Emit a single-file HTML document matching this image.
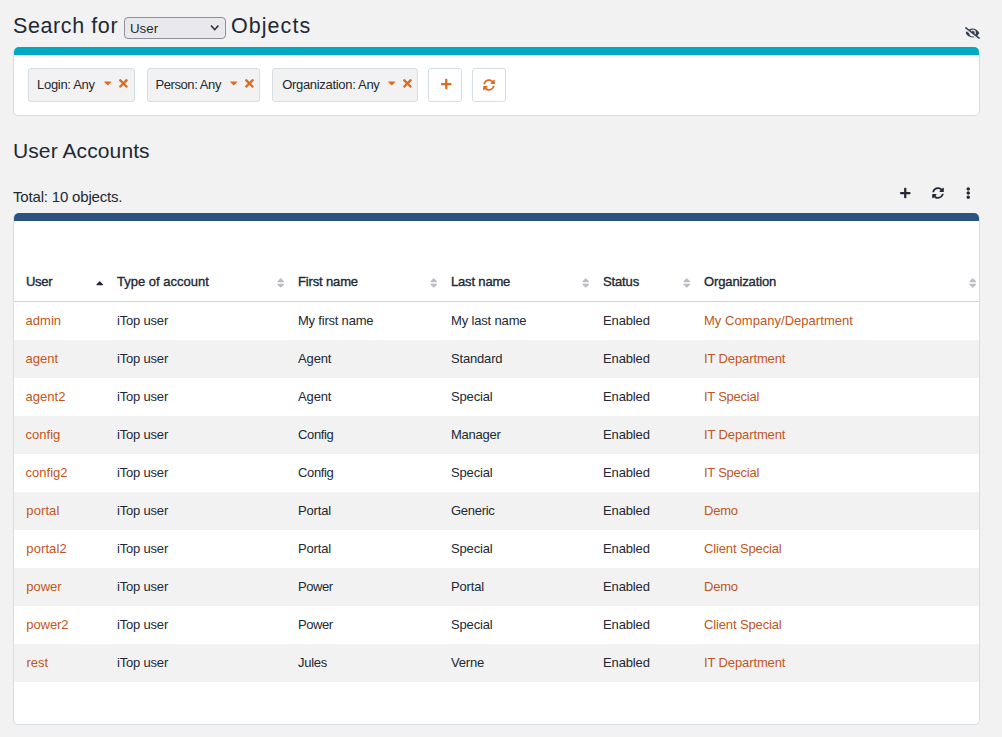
<!DOCTYPE html>
<html lang="en">
<head>
<meta charset="utf-8">
<title>Search for User Objects</title>
<style>
*{box-sizing:border-box;margin:0;padding:0}
html,body{width:1002px;height:737px;overflow:hidden;background:#f2f2f2;}
body{font-family:"Liberation Sans",sans-serif;color:#212934;position:relative;font-size:13px}
.abs{position:absolute;white-space:nowrap}
.h1{left:13px;top:9.5px;font-size:21.5px;line-height:32px;color:#212934;letter-spacing:0.6px}
.sel{left:124px;top:17px;width:102px;height:22px;border:1px solid #8f8f9d;border-radius:4px;background:#e9e9ed;font-size:13.3px;line-height:21px;padding-left:5px;color:#212934}
.panel{left:13px;width:967px;background:#fff;border:1px solid #d5dde5;border-radius:5px}
.bar{left:14px;width:965px;height:8px;border-radius:5px 5px 0 0}
.chip{top:68px;height:34px;background:#f2f2f2;border:1px solid #d5dde5;border-radius:3px;font-size:13px;line-height:32px;padding-left:8.5px;color:#212934;letter-spacing:-0.31px}
.btn{top:68px;height:34px;width:34px;background:#fff;border:1px solid #d5dde5;border-radius:3px}
.h2{left:13px;top:136px;font-size:21px;line-height:30px;color:#212934;letter-spacing:0.1px}
.total{left:13px;top:187px;font-size:15px;line-height:20px;color:#212934;letter-spacing:-0.18px}
.th{top:272px;font-size:13px;line-height:20px;font-weight:normal;-webkit-text-stroke:0.35px #212934;color:#212934}
.row{position:absolute;left:14px;width:965px;height:38px}
.row.alt{background:#f2f2f2}
.c{position:absolute;top:9px;line-height:20px;font-size:13px;white-space:nowrap;color:#212934}
.c.lk{color:#c05621}
svg{position:absolute;overflow:visible}
</style>
</head>
<body>
<div class="abs h1">Search for</div>
<div class="abs sel">User</div>
<svg style="left:209.8px;top:24.3px" width="10" height="8" viewBox="0 0 10 8"><path d="M1 1.5 L4.7 5.7 L8.4 1.5" fill="none" stroke="#212934" stroke-width="1.5"/></svg>
<div class="abs h1" style="left:231px;letter-spacing:1.05px">Objects</div>

<div class="abs panel" style="top:47px;height:69px"></div>
<div class="abs bar" style="top:47px;background:#00a8c2"></div>
<div class="abs chip" style="left:28px;width:107px;padding-left:8.1px">Login: Any</div>
<div class="abs chip" style="left:147px;width:113px;padding-left:7.5px;letter-spacing:-0.42px">Person: Any</div>
<div class="abs chip" style="left:272px;width:146px;padding-left:9.2px">Organization: Any</div>
<div class="abs btn" style="left:428px"></div>
<div class="abs btn" style="left:472px"></div>

<div class="abs h2">User Accounts</div>
<div class="abs total">Total: 10 objects.</div>

<div class="abs panel" style="top:213px;height:512px"></div>
<div class="abs bar" style="top:213px;background:#2c5282"></div>
<div class="abs" style="left:14px;top:301px;width:965px;height:1px;background:#ccd4db"></div>
<div class="abs th" style="left:26px;letter-spacing:-0.3px">User</div>
<div class="abs th" style="left:117px">Type of account</div>
<div class="abs th" style="left:298px;letter-spacing:-0.15px">First name</div>
<div class="abs th" style="left:451px;letter-spacing:-0.17px">Last name</div>
<div class="abs th" style="left:603px;letter-spacing:-0.14px">Status</div>
<div class="abs th" style="left:704px;letter-spacing:-0.13px">Organization</div>
<div class="row" style="top:302px">
<span class="c lk" style="left:11.6px">admin</span>
<span class="c" style="left:103.0px;letter-spacing:-0.188px">iTop user</span>
<span class="c" style="left:284.0px;letter-spacing:-0.208px">My first name</span>
<span class="c" style="left:437.0px;letter-spacing:-0.159px">My last name</span>
<span class="c" style="left:589.0px;letter-spacing:-0.133px">Enabled</span>
<span class="c lk" style="left:690.0px;letter-spacing:0.040px">My Company/Department</span>
</div>
<div class="row alt" style="top:340px">
<span class="c lk" style="left:11.6px">agent</span>
<span class="c" style="left:103.0px;letter-spacing:-0.188px">iTop user</span>
<span class="c" style="left:284.0px;letter-spacing:-0.125px">Agent</span>
<span class="c" style="left:437.0px;letter-spacing:-0.179px">Standard</span>
<span class="c" style="left:589.0px;letter-spacing:-0.133px">Enabled</span>
<span class="c lk" style="left:690.0px;letter-spacing:-0.117px">IT Department</span>
</div>
<div class="row" style="top:378px">
<span class="c lk" style="left:11.6px">agent2</span>
<span class="c" style="left:103.0px;letter-spacing:-0.188px">iTop user</span>
<span class="c" style="left:284.0px;letter-spacing:-0.125px">Agent</span>
<span class="c" style="left:437.0px;letter-spacing:-0.167px">Special</span>
<span class="c" style="left:589.0px;letter-spacing:-0.133px">Enabled</span>
<span class="c lk" style="left:690.0px;letter-spacing:-0.244px">IT Special</span>
</div>
<div class="row alt" style="top:416px">
<span class="c lk" style="left:11.6px">config</span>
<span class="c" style="left:103.0px;letter-spacing:-0.188px">iTop user</span>
<span class="c" style="left:284.0px;letter-spacing:-0.350px">Config</span>
<span class="c" style="left:437.0px;letter-spacing:-0.233px">Manager</span>
<span class="c" style="left:589.0px;letter-spacing:-0.133px">Enabled</span>
<span class="c lk" style="left:690.0px;letter-spacing:-0.117px">IT Department</span>
</div>
<div class="row" style="top:454px">
<span class="c lk" style="left:11.6px">config2</span>
<span class="c" style="left:103.0px;letter-spacing:-0.188px">iTop user</span>
<span class="c" style="left:284.0px;letter-spacing:-0.350px">Config</span>
<span class="c" style="left:437.0px;letter-spacing:-0.167px">Special</span>
<span class="c" style="left:589.0px;letter-spacing:-0.133px">Enabled</span>
<span class="c lk" style="left:690.0px;letter-spacing:-0.244px">IT Special</span>
</div>
<div class="row alt" style="top:492px">
<span class="c lk" style="left:12.3px;letter-spacing:0.100px">portal</span>
<span class="c" style="left:103.0px;letter-spacing:-0.188px">iTop user</span>
<span class="c" style="left:284.0px;letter-spacing:-0.140px">Portal</span>
<span class="c" style="left:437.0px;letter-spacing:-0.292px">Generic</span>
<span class="c" style="left:589.0px;letter-spacing:-0.133px">Enabled</span>
<span class="c lk" style="left:690.0px;letter-spacing:-0.233px">Demo</span>
</div>
<div class="row" style="top:530px">
<span class="c lk" style="left:12.3px;letter-spacing:0.100px">portal2</span>
<span class="c" style="left:103.0px;letter-spacing:-0.188px">iTop user</span>
<span class="c" style="left:284.0px;letter-spacing:-0.140px">Portal</span>
<span class="c" style="left:437.0px;letter-spacing:-0.167px">Special</span>
<span class="c" style="left:589.0px;letter-spacing:-0.133px">Enabled</span>
<span class="c lk" style="left:690.0px;letter-spacing:-0.135px">Client Special</span>
</div>
<div class="row alt" style="top:568px">
<span class="c lk" style="left:12.3px;letter-spacing:-0.025px">power</span>
<span class="c" style="left:103.0px;letter-spacing:-0.188px">iTop user</span>
<span class="c" style="left:284.0px;letter-spacing:-0.438px">Power</span>
<span class="c" style="left:437.0px;letter-spacing:-0.140px">Portal</span>
<span class="c" style="left:589.0px;letter-spacing:-0.133px">Enabled</span>
<span class="c lk" style="left:690.0px;letter-spacing:-0.233px">Demo</span>
</div>
<div class="row" style="top:606px">
<span class="c lk" style="left:12.3px;letter-spacing:-0.080px">power2</span>
<span class="c" style="left:103.0px;letter-spacing:-0.188px">iTop user</span>
<span class="c" style="left:284.0px;letter-spacing:-0.438px">Power</span>
<span class="c" style="left:437.0px;letter-spacing:-0.167px">Special</span>
<span class="c" style="left:589.0px;letter-spacing:-0.133px">Enabled</span>
<span class="c lk" style="left:690.0px;letter-spacing:-0.135px">Client Special</span>
</div>
<div class="row alt" style="top:644px">
<span class="c lk" style="left:12.4px">rest</span>
<span class="c" style="left:103.0px;letter-spacing:-0.188px">iTop user</span>
<span class="c" style="left:284.0px;letter-spacing:-0.250px">Jules</span>
<span class="c" style="left:437.0px;letter-spacing:-0.175px">Verne</span>
<span class="c" style="left:589.0px;letter-spacing:-0.133px">Enabled</span>
<span class="c lk" style="left:690.0px;letter-spacing:-0.117px">IT Department</span>
</div>
<svg style="left:103.6px;top:77.2px" width="7.500" height="12" viewBox="0 0 320 512"><path fill="#dd6b20" d="M31.3 192h257.3c17.8 0 26.7 21.5 14.1 34.1L174.1 354.8c-7.8 7.8-20.5 7.8-28.3 0L17.2 226.1C4.6 213.5 13.5 192 31.3 192z"/></svg>
<svg style="left:229.6px;top:77.2px" width="7.500" height="12" viewBox="0 0 320 512"><path fill="#dd6b20" d="M31.3 192h257.3c17.8 0 26.7 21.5 14.1 34.1L174.1 354.8c-7.8 7.8-20.5 7.8-28.3 0L17.2 226.1C4.6 213.5 13.5 192 31.3 192z"/></svg>
<svg style="left:387.6px;top:77.2px" width="7.500" height="12" viewBox="0 0 320 512"><path fill="#dd6b20" d="M31.3 192h257.3c17.8 0 26.7 21.5 14.1 34.1L174.1 354.8c-7.8 7.8-20.5 7.8-28.3 0L17.2 226.1C4.6 213.5 13.5 192 31.3 192z"/></svg>
<svg style="left:119.3px;top:77.1px" width="8.800" height="12.8" viewBox="0 0 352 512"><path fill="#dd6b20" d="M242.72 256l100.07-100.07c12.28-12.28 12.28-32.19 0-44.48l-22.24-22.24c-12.28-12.28-32.19-12.28-44.48 0L176 189.28 75.93 89.21c-12.28-12.28-32.19-12.28-44.48 0L9.21 111.45c-12.28 12.28-12.28 32.19 0 44.48L109.28 256 9.21 356.07c-12.28 12.28-12.28 32.19 0 44.48l22.24 22.24c12.28 12.28 32.2 12.28 44.48 0L176 322.72l100.07 100.07c12.28 12.28 32.2 12.28 44.48 0l22.24-22.24c12.28-12.28 12.28-32.19 0-44.48L242.72 256z"/></svg>
<svg style="left:245.3px;top:77.1px" width="8.800" height="12.8" viewBox="0 0 352 512"><path fill="#dd6b20" d="M242.72 256l100.07-100.07c12.28-12.28 12.28-32.19 0-44.48l-22.24-22.24c-12.28-12.28-32.19-12.28-44.48 0L176 189.28 75.93 89.21c-12.28-12.28-32.19-12.28-44.48 0L9.21 111.45c-12.28 12.28-12.28 32.19 0 44.48L109.28 256 9.21 356.07c-12.28 12.28-12.28 32.19 0 44.48l22.24 22.24c12.28 12.28 32.2 12.28 44.48 0L176 322.72l100.07 100.07c12.28 12.28 32.2 12.28 44.48 0l22.24-22.24c12.28-12.28 12.28-32.19 0-44.48L242.72 256z"/></svg>
<svg style="left:403.3px;top:77.1px" width="8.800" height="12.8" viewBox="0 0 352 512"><path fill="#dd6b20" d="M242.72 256l100.07-100.07c12.28-12.28 12.28-32.19 0-44.48l-22.24-22.24c-12.28-12.28-32.19-12.28-44.48 0L176 189.28 75.93 89.21c-12.28-12.28-32.19-12.28-44.48 0L9.21 111.45c-12.28 12.28-12.28 32.19 0 44.48L109.28 256 9.21 356.07c-12.28 12.28-12.28 32.19 0 44.48l22.24 22.24c12.28 12.28 32.2 12.28 44.48 0L176 322.72l100.07 100.07c12.28 12.28 32.2 12.28 44.48 0l22.24-22.24c12.28-12.28 12.28-32.19 0-44.48L242.72 256z"/></svg>
<svg style="left:440.5px;top:77.95px" width="10.500" height="12" viewBox="0 0 448 512"><path fill="#dd6b20" d="M416 208H272V64c0-17.67-14.33-32-32-32h-32c-17.67 0-32 14.33-32 32v144H32c-17.67 0-32 14.33-32 32v32c0 17.67 14.33 32 32 32h144v144c0 17.67 14.33 32 32 32h32c17.67 0 32-14.33 32-32V304h144c17.67 0 32-14.33 32-32v-32c0-17.67-14.33-32-32-32z"/></svg>
<svg style="left:483.2px;top:78.55px" width="12.000" height="12" viewBox="0 0 512 512"><path fill="#dd6b20" d="M370.72 133.28C339.458 104.008 298.888 87.962 255.848 88c-77.458.068-144.328 53.178-162.791 126.85-1.344 5.363-6.122 9.15-11.651 9.15H24.103c-7.498 0-13.194-6.807-11.807-14.176C33.933 94.924 134.813 8 256 8c66.448 0 126.791 26.136 171.315 68.685L463.03 40.97C478.149 25.851 504 36.559 504 57.941V192c0 13.255-10.745 24-24 24H345.941c-21.382 0-32.09-25.851-16.971-40.971l41.75-41.749zM32 296h134.059c21.382 0 32.09 25.851 16.971 40.971l-41.75 41.75c31.262 29.273 71.835 45.319 114.876 45.28 77.418-.07 144.315-53.144 162.787-126.849 1.344-5.363 6.122-9.15 11.651-9.15h57.304c7.498 0 13.194 6.807 11.807 14.176C478.067 417.076 377.187 504 256 504c-66.448 0-126.791-26.136-171.315-68.685L48.97 471.03C33.851 486.149 8 475.441 8 454.059V320c0-13.255 10.745-24 24-24z"/></svg>
<svg style="left:965px;top:26.6px" width="15.000" height="12" viewBox="0 0 640 512"><path fill="#333e51" d="M320 400c-75.85 0-137.25-58.71-142.9-133.11L72.2 185.820c-13.79 17.3-26.48 35.59-36.72 55.59a32.350 32.350 0 0 0 0 29.190C89.710 376.410 197.070 448 320 448c26.910 0 52.870-4 77.890-10.460L346 397.390a144.130 144.130 0 0 1-26 2.610zm313.820 58.100l-110.550-85.440a331.250 331.250 0 0 0 81.250-102.070 32.350 32.350 0 0 0 0-29.190C550.290 135.590 442.930 64 320 64a308.150 308.150 0 0 0-147.320 37.700L45.460 3.370A16 16 0 0 0 23 6.180L3.370 31.450A16 16 0 0 0 6.180 53.900l588.360 454.730a16 16 0 0 0 22.460-2.810l19.640-25.270a16 16 0 0 0-2.820-22.450zm-183.720-142l-39.300-30.380A94.750 94.750 0 0 0 416 256a94.760 94.760 0 0 0-121.310-92.210A47.650 47.650 0 0 1 304 192a46.640 46.640 0 0 1-1.540 10l-73.610-56.890A142.310 142.310 0 0 1 320 112a143.920 143.920 0 0 1 144 144c0 21.630-5.290 41.790-13.900 60.110z"/></svg>
<svg style="left:900.05px;top:186.85px" width="10.500" height="12" viewBox="0 0 448 512"><path fill="#212934" d="M416 208H272V64c0-17.67-14.33-32-32-32h-32c-17.67 0-32 14.33-32 32v144H32c-17.67 0-32 14.33-32 32v32c0 17.67 14.33 32 32 32h144v144c0 17.67 14.33 32 32 32h32c17.67 0 32-14.33 32-32V304h144c17.67 0 32-14.33 32-32v-32c0-17.67-14.33-32-32-32z"/></svg>
<svg style="left:932.1px;top:186.7px" width="12.000" height="12" viewBox="0 0 512 512"><path fill="#212934" d="M370.72 133.28C339.458 104.008 298.888 87.962 255.848 88c-77.458.068-144.328 53.178-162.791 126.85-1.344 5.363-6.122 9.15-11.651 9.15H24.103c-7.498 0-13.194-6.807-11.807-14.176C33.933 94.924 134.813 8 256 8c66.448 0 126.791 26.136 171.315 68.685L463.03 40.97C478.149 25.851 504 36.559 504 57.941V192c0 13.255-10.745 24-24 24H345.941c-21.382 0-32.09-25.851-16.971-40.971l41.75-41.749zM32 296h134.059c21.382 0 32.09 25.851 16.971 40.971l-41.75 41.75c31.262 29.273 71.835 45.319 114.876 45.28 77.418-.07 144.315-53.144 162.787-126.849 1.344-5.363 6.122-9.15 11.651-9.15h57.304c7.498 0 13.194 6.807 11.807 14.176C478.067 417.076 377.187 504 256 504c-66.448 0-126.791-26.136-171.315-68.685L48.97 471.03C33.851 486.149 8 475.441 8 454.059V320c0-13.255 10.745-24 24-24z"/></svg>
<svg style="left:966.05px;top:186.7px" width="4.500" height="12" viewBox="0 0 192 512"><path fill="#212934" d="M96 184c39.8 0 72 32.2 72 72s-32.2 72-72 72-72-32.2-72-72 32.2-72 72-72zM24 80c0 39.8 32.2 72 72 72s72-32.2 72-72S135.8 8 96 8 24 40.2 24 80zm0 352c0 39.8 32.2 72 72 72s72-32.2 72-72-32.2-72-72-72-72 32.2-72 72z"/></svg>
<svg style="left:96px;top:279.7px" width="7.500" height="12" viewBox="0 0 320 512"><path fill="#212934" d="M279 224H41c-21.4 0-32.1-25.9-17-41L143 64c9.4-9.4 24.600-9.4 33.900 0l119 119c15.200 15.100 4.500 41-16.900 41z"/></svg>
<svg style="left:276.5px;top:276.5px" width="7.500" height="12" viewBox="0 0 320 512"><path fill="#bcbdc4" d="M41 288h238c21.4 0 32.1 25.9 17 41L177 448c-9.4 9.4-24.6 9.4-33.9 0L24 329c-15.1-15.1-4.4-41 17-41zm255-105L177 64c-9.4-9.4-24.600-9.4-33.9 0L24 183c-15.1 15.1-4.4 41 17 41h238c21.4 0 32.1-25.900 17-41z"/></svg>
<svg style="left:429.5px;top:276.5px" width="7.500" height="12" viewBox="0 0 320 512"><path fill="#bcbdc4" d="M41 288h238c21.4 0 32.1 25.9 17 41L177 448c-9.4 9.4-24.6 9.4-33.9 0L24 329c-15.1-15.1-4.4-41 17-41zm255-105L177 64c-9.4-9.4-24.600-9.4-33.9 0L24 183c-15.1 15.1-4.4 41 17 41h238c21.4 0 32.1-25.900 17-41z"/></svg>
<svg style="left:581.5px;top:276.5px" width="7.500" height="12" viewBox="0 0 320 512"><path fill="#bcbdc4" d="M41 288h238c21.4 0 32.1 25.9 17 41L177 448c-9.4 9.4-24.6 9.4-33.9 0L24 329c-15.1-15.1-4.4-41 17-41zm255-105L177 64c-9.4-9.4-24.600-9.4-33.9 0L24 183c-15.1 15.1-4.4 41 17 41h238c21.4 0 32.1-25.900 17-41z"/></svg>
<svg style="left:682.5px;top:276.5px" width="7.500" height="12" viewBox="0 0 320 512"><path fill="#bcbdc4" d="M41 288h238c21.4 0 32.1 25.9 17 41L177 448c-9.4 9.4-24.6 9.4-33.9 0L24 329c-15.1-15.1-4.4-41 17-41zm255-105L177 64c-9.4-9.4-24.600-9.4-33.9 0L24 183c-15.1 15.1-4.4 41 17 41h238c21.4 0 32.1-25.900 17-41z"/></svg>
<svg style="left:969.0px;top:276.5px" width="7.500" height="12" viewBox="0 0 320 512"><path fill="#bcbdc4" d="M41 288h238c21.4 0 32.1 25.9 17 41L177 448c-9.4 9.4-24.6 9.4-33.9 0L24 329c-15.1-15.1-4.4-41 17-41zm255-105L177 64c-9.4-9.4-24.600-9.4-33.9 0L24 183c-15.1 15.1-4.4 41 17 41h238c21.4 0 32.1-25.900 17-41z"/></svg>
</body>
</html>
